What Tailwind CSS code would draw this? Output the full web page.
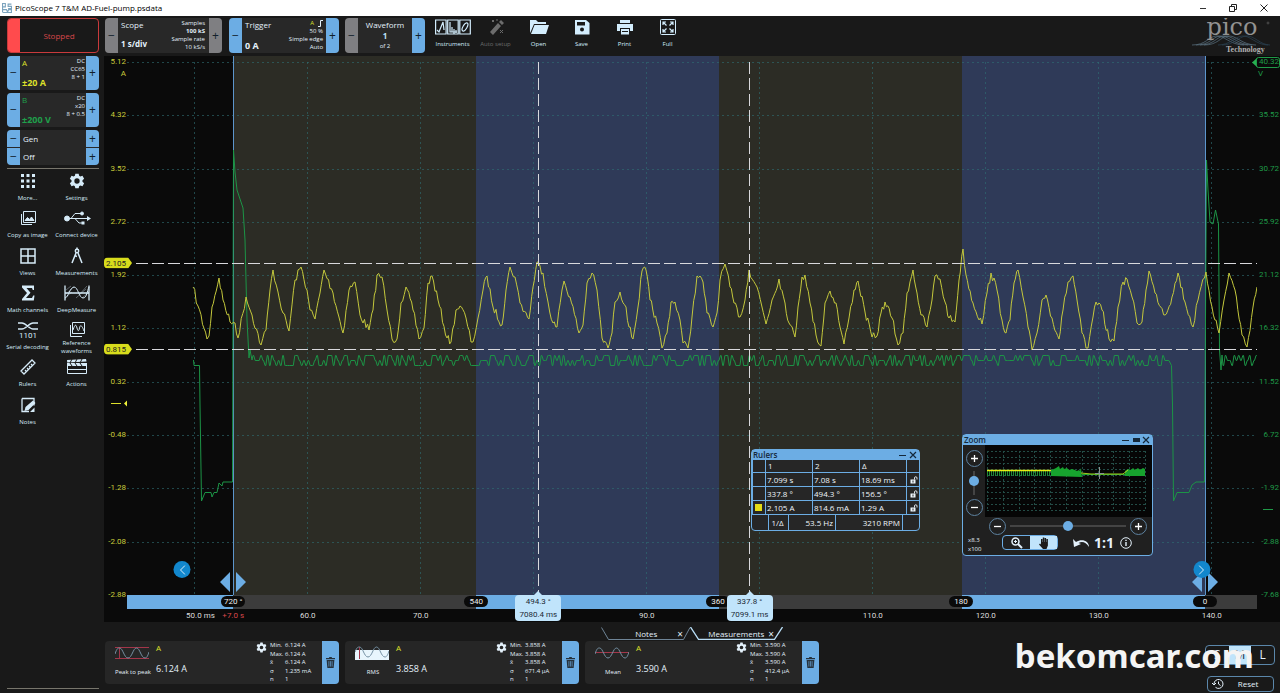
<!DOCTYPE html>
<html lang="en">
<head>
    <meta charset="UTF-8">
    <meta name="viewport" content="width=device-width, initial-scale=1.0">
    <title>PicoScope 7 T&amp;M AD-Fuel-pump.psdata</title>
    <script src="https://cdn.jsdelivr.net/npm/@tailwindcss/browser@4"></script>
</head>
<body class="h-screen min-h-[640px] flex flex-col overflow-hidden bg-[#191919] text-[#e4f1fb] font-['Open_Sans',sans-serif]">
    <!-- Shared icons -->
    <svg class="hidden">
        <symbol id="gear" viewBox="0 0 24 24"><path fill="currentColor" fill-rule="evenodd" d="M9.500 1h5l.7 3.300 1.800 1 3.200-1.100 2.500 4.300-2.500 2.300v2.400l2.500 2.300-2.500 4.300-3.200-1.100-1.800 1-.7 3.300h-5l-.7-3.300-1.800-1-3.200 1.100-2.500-4.300 2.500-2.300v-2.400L1.300 8.500l2.500-4.300L7 5.300l1.800-1zM12 8a4 4 0 1 0 0 8 4 4 0 0 0 0-8z"/></symbol>
        <symbol id="trash" viewBox="0 0 10 12"><path fill="currentColor" d="M3.500 0h3v1H10v1.500H0V1h3.500zM.7 3.200h8.600L8.500 12h-7z"/><path stroke="#6cade4" stroke-width=".7" d="M3.200 4.500v6M5 4.500v6M6.800 4.500v6"/></symbol>
        <symbol id="lock" viewBox="0 0 16 16"><path fill="currentColor" d="M1 7h10v8H1z"/><path fill="none" stroke="currentColor" stroke-width="1.800" d="M9 7V4a2.500 2.500 0 0 1 5 0v3"/><path fill="#262626" d="M5 9h2v4H5z"/></symbol>
    </svg>

    <!-- Title bar -->
    <header class="h-4 shrink-0 flex items-center bg-white text-black text-[8px] pl-0.5">
        <svg class="size-[10px] mr-[3px]" viewBox="0 0 9 9" fill="none" stroke="#7ba3bd"><path d="M.5 8.500V.5h2.500v3h-2M8.500 1H5.500v2h3v2h-3M1 6h3l1 2 1-2h2.500v2.500H1"/></svg>
        <h1 class="flex-1">PicoScope 7 T&amp;M AD-Fuel-pump.psdata</h1>
        <button aria-label="Minimise" class="w-[30px] flex justify-center"><svg class="size-2" viewBox="0 0 8 8"><path stroke="#333" d="M1 4.500h6"/></svg></button>
        <button aria-label="Restore" class="w-[30px] flex justify-center"><svg class="size-2" viewBox="0 0 8 8" fill="none" stroke="#222"><path d="M.5 2.500h5v5h-5zM2.500 2V.5h5v5H6"/></svg></button>
        <button aria-label="Close" class="w-[32px] flex justify-center"><svg class="size-2" viewBox="0 0 8 8"><path stroke="#222" d="M.5.5l7 7M7.500.5l-7 7"/></svg></button>
    </header>

    <div class="flex-1 min-h-0 flex">
        <!-- Sidebar -->
        <aside class="w-[104px] shrink-0 flex flex-col pt-0.5 pb-1 pl-[7px] pr-[5px]">
            <button class="h-[35px] shrink-0 flex rounded border border-[#c93a3c] overflow-hidden text-[#d8474a] text-[8px]">
                <span class="w-3 self-stretch bg-[#ff4b4d]"></span>
                <span class="flex-1 self-center">Stopped</span>
            </button>

            <!-- Channel A -->
            <div class="mt-[3px] h-[34px] shrink-0 flex rounded overflow-hidden bg-[#282828]">
                <button class="w-[13px] bg-[#6cade4] text-[#12202c] text-[12px]">−</button>
                <div class="flex-1 flex flex-col justify-between pl-0.5 py-0.5 text-[#dde02a] leading-[10px]">
                    <span class="text-[8px]">A</span>
                    <span class="text-[9px] font-bold">±20 A</span>
                </div>
                <div class="text-right text-[6px] leading-[8px] pr-px pt-px">DC<br>CC65<br>8 + 1</div>
                <button class="w-[13px] bg-[#6cade4] text-[#12202c] text-[12px]">+</button>
            </div>

            <!-- Channel B -->
            <div class="mt-[3px] h-[34px] shrink-0 flex rounded overflow-hidden bg-[#282828]">
                <button class="w-[13px] bg-[#6cade4] text-[#12202c] text-[12px]">−</button>
                <div class="flex-1 flex flex-col justify-between pl-0.5 py-0.5 text-[#1fa04b] leading-[10px]">
                    <span class="text-[8px]">B</span>
                    <span class="text-[9px] font-bold">±200 V</span>
                </div>
                <div class="text-right text-[6px] leading-[8px] pr-px pt-px">DC<br>x20<br>8 + 0.5</div>
                <button class="w-[13px] bg-[#6cade4] text-[#12202c] text-[12px]">+</button>
            </div>

            <!-- Signal generator -->
            <div class="mt-[3px] h-[35px] shrink-0 grid grid-rows-2 gap-px rounded overflow-hidden bg-[#282828] text-[8px]">
                <div class="flex items-center">
                    <button class="w-[13px] h-full bg-[#6cade4] text-[#12202c] text-[12px] leading-[12px]">−</button>
                    <span class="flex-1 pl-[3px]">Gen</span>
                    <button class="w-[13px] h-full bg-[#6cade4] text-[#12202c] text-[12px] leading-[12px]">+</button>
                </div>
                <div class="flex items-center">
                    <button class="w-[13px] h-full bg-[#6cade4] text-[#12202c] text-[12px] leading-[12px]">−</button>
                    <span class="flex-1 pl-[3px]">Off</span>
                    <button class="w-[13px] h-full bg-[#6cade4] text-[#12202c] text-[12px] leading-[12px]">+</button>
                </div>
            </div>
            <hr class="mt-[3px] border-[#77756c]">

            <!-- Tools -->
            <nav class="mt-[3px] -ml-1 -mr-0.5 h-[261px] shrink-0 grid grid-cols-2 grid-rows-7 text-[6px] leading-[8px] text-center text-[#d6ebf8] [&>button]:flex [&>button]:flex-col [&>button]:items-center [&>button]:justify-start [&_svg]:h-[18px] [&_svg]:shrink-0 [&_svg]:mb-1">
                <button><svg viewBox="0 0 18 18" fill="currentColor"><path d="M2 2h3v3H2zM7.500 2h3v3h-3zM13 2h3v3h-3zM2 7.500h3v3H2zM7.500 7.500h3v3h-3zM13 7.500h3v3h-3zM2 13h3v3H2zM7.500 13h3v3h-3zM13 13h3v3h-3z"/></svg>More...</button>
                <button><svg viewBox="0 0 18 18"><use href="#gear" x="1" y="1" width="16" height="16"/></svg>Settings</button>
                <button><svg viewBox="0 0 18 18" fill="none" stroke="currentColor"><path d="M4.500 2.500h12v11h-12zM2.500 5v10.500H13"/><path fill="currentColor" d="M6 11.500l2.500-3 2 2 2-2.500 2.500 3.500z"/></svg>Copy as image</button>
                <button><svg viewBox="0 0 28 18" fill="none" stroke="currentColor"><path d="M3 9.500h23M8 9.500l4-5h6M12 9.500l4 4.500h4"/><circle cx="4" cy="9.500" r="2.500" fill="currentColor"/><circle cx="19" cy="4.500" r="1.500" fill="currentColor"/><path fill="currentColor" stroke="none" d="M18.500 12.500h3v3h-3zM24 7l4 2.500-4 2.500z"/></svg>Connect device</button>
                <button><svg viewBox="0 0 18 18" fill="none" stroke="currentColor" stroke-width="1.500"><path d="M2 2h14v14H2zM9 2v14M2 9h14"/></svg>Views</button>
                <button><svg viewBox="0 0 18 18" fill="none" stroke="currentColor" stroke-width="1.500"><circle cx="9" cy="4" r="1.700"/><path d="M9 .5v2M8 6L4 16M10 6l4 10M6.500 8.500l2.500 1"/></svg>Measurements</button>
                <button><svg viewBox="0 0 18 18" fill="currentColor"><path d="M3 1.500h12v4.500h-1.200L13 4H7.500l4 4.800L7 14h6l1.200-2.500h1.300L14.800 16.500H3V15l5-6-5-5.500z"/></svg>Math channels</button>
                <button><svg viewBox="0 0 28 18" fill="none" stroke="currentColor"><path stroke-width="1.300" d="M2 1.500v15M26 1.500v15M2 9h24"/><path d="M2 14C5 14 7 3 11 3s5 11 9 11 4-7 6-11"/><path stroke-width=".5" opacity=".7" d="M3 6l5-4M3 10l8-7M13 14l10-9M19 14l7-6M16 11l8-9M3 13l6-5"/></svg>DeepMeasure</button>
                <button><svg viewBox="0 0 20 18" fill="none" stroke="currentColor" stroke-width="1.300"><path d="M0 2h4c4 0 7 6 11 6h5M0 8h4c4 0 7-6 11-6h5"/><text x="10" y="17" text-anchor="middle" font-size="8" font-family="Roboto" fill="currentColor" stroke="none">1101</text></svg>Serial decoding</button>
                <button><svg viewBox="0 0 18 18" fill="none" stroke="currentColor"><path d="M4.500 1.500h12v11h-12zM2.500 4v11.500H14"/><path d="M5 9c2-6 3-6 4-2s2 3 2.500 0 2-4 4.500 3"/></svg><span class="-mt-1">Reference<br>waveforms</span></button>
                <button><svg viewBox="0 0 18 18" fill="none" stroke="currentColor" stroke-width="1.300"><path d="M2 13L13 2l3 3L5 16zM6 12l1 1M8 10l1 1M10 8l1 1M12 6l1 1"/></svg>Rulers</button>
                <button><svg viewBox="0 0 22 18"><path fill="none" stroke="currentColor" d="M1.500 7.500h19v8h-19z"/><path fill="currentColor" d="M1 2l19-1 .5 2.500L1.200 4.500zM1 5h20v3H1zM1 11h20v1H1z"/><path stroke="#191919" d="M6 1L4 5M11 1L9 5M16 1l-2 4M4 5l2 3M9 5l2 3M14 5l2 3"/></svg>Actions</button>
                <button><svg viewBox="0 0 18 18"><path fill="none" stroke="currentColor" stroke-width="1.300" d="M3 2.500h12v7M3 2.500v13h7"/><path fill="currentColor" d="M5.500 15l1-4L14 4.500l2.500 2.500L9.500 14zM11 16h4.500v-4.500z"/></svg>Notes</button>
            </nav>
            <hr class="mt-auto border-[#77756c]">
        </aside>

        <div class="flex-1 min-w-0 flex flex-col">
            <!-- Toolbar -->
            <div class="h-10 shrink-0 flex items-start pt-0.5 pl-px">
                <div class="w-[117px] h-[35px] flex rounded overflow-hidden bg-[#282828]">
                    <button class="w-[13px] bg-[#7f7f82] text-[#12202c] text-[12px]">−</button>
                    <div class="flex-1 flex flex-col justify-between pl-[3px] py-0.5 pb-1 leading-[10px] whitespace-nowrap">
                        <span class="text-[8px]">Scope</span>
                        <span class="text-[8px] font-bold">1 s/div</span>
                    </div>
                    <div class="text-right text-[6px] leading-[8px] pr-1 pt-px whitespace-nowrap">Samples<br><b>100 kS</b><br>Sample rate<br>10 kS/s</div>
                    <button class="w-[13px] bg-[#7f7f82] text-[#12202c] text-[12px]">+</button>
                </div>
                <div class="ml-[7px] w-[110px] h-[35px] flex rounded overflow-hidden bg-[#282828]">
                    <button class="w-[13px] bg-[#6cade4] text-[#12202c] text-[12px]">−</button>
                    <div class="flex-1 flex flex-col justify-between pl-[3px] py-0.5 leading-[10px] whitespace-nowrap">
                        <span class="text-[8px]">Trigger</span>
                        <span class="text-[9px] font-bold">0 A</span>
                    </div>
                    <div class="text-right text-[6px] leading-[8px] pr-[3px] pt-px whitespace-nowrap">
                        <span class="text-[#dde02a] mr-1">A</span><svg class="inline h-[7px] w-[5px]" viewBox="0 0 5 7" fill="none" stroke="currentColor"><path d="M0 6.500h2.500v-6H5"/></svg><br>50 %<br>Simple edge<br>Auto
                    </div>
                    <button class="w-[13px] bg-[#6cade4] text-[#12202c] text-[12px]">+</button>
                </div>
                <div class="ml-1.5 w-20 h-[35px] flex rounded overflow-hidden bg-[#282828]">
                    <button class="w-[13px] bg-[#7f7f82] text-[#12202c] text-[12px]">−</button>
                    <div class="flex-1 flex flex-col items-center justify-center text-[8px] leading-[11px]">
                        <span>Waveform</span><span class="font-bold text-[#bfe3fa]">1</span><span class="text-[6px]">of 2</span>
                    </div>
                    <button class="w-[13px] bg-[#6cade4] text-[#12202c] text-[12px]">+</button>
                </div>
                <nav class="ml-[6px] flex text-[6px] leading-[8px] text-[#d3edfd] [&>button]:w-[43px] [&>button]:shrink-0 [&>button]:flex [&>button]:flex-col [&>button]:items-center [&_svg]:h-[18px] [&_svg]:mb-1">
                    <button><svg class="w-9" viewBox="0 0 36 18" fill="none" stroke="currentColor" stroke-width="1.200"><path d="M.6 2h10.500v14H.6zM12.700 2h10.500v14H12.700zM24.800 2h10.500v14H24.800z"/><path d="M2 12l2 2L8 4l1 8M15 4v10h7M17 9v5M19 11v5M21 12v3"/><ellipse cx="30" cy="9" rx="2" ry="4.500" transform="rotate(30 30 9)"/></svg>Instruments</button>
                    <button class="text-[#6c6c6c]" disabled><svg viewBox="0 0 18 18" fill="currentColor"><path d="M3 14L11 5l3 3-8 9zM12 4l2-2 3 3-2 2z"/><path stroke="currentColor" d="M5 2l2 2M7 2L5 4M13 12l3 3M16 12l-3 3M10 1v2"/></svg>Auto setup</button>
                    <button><svg viewBox="0 0 20 18" fill="currentColor"><path d="M1 2h6l2 2h8v2H5L2 13l-1 2z"/><path d="M5.500 7H20l-3 9H2z"/></svg>Open</button>
                    <button><svg viewBox="0 0 18 18" fill="currentColor" fill-rule="evenodd"><path d="M2 2h11l3.500 3v11.500H2zM4 4v3.500h8V4zM9 9.500a2 2 0 1 0 0 4 2 2 0 0 0 0-4z"/></svg>Save</button>
                    <button><svg viewBox="0 0 18 18" fill="currentColor"><path d="M4 2h10v3H4zM1 6h16v7h-3v-3H4v3H1z"/><path d="M5 11h8v5.500H5z"/><path stroke="#191919" d="M6 13.500h6"/></svg>Print</button>
                    <button><svg viewBox="0 0 18 18" fill="none" stroke="currentColor"><rect x="1.500" y="1.500" width="15" height="15" rx="1"/><path stroke-width="1.200" d="M4 7V4h3M4 4l3.500 3.500M11 4h3v3M14 4l-3.500 3.500M4 11v3h3M4 14l3.500-3.500M11 14h3v-3M14 14l-3.500-3.500"/></svg>Full</button>
                </nav>
                <!-- Logo -->
                <svg class="ml-auto mr-2 w-[82px] h-[38px]" viewBox="0 0 82 38">
                    <g fill="none" stroke="#5d7585" stroke-width=".7">
                        <path d="M2 27c14 0 16-8 24-9s14 9 28 9M6 27c14 0 16-8 24-9s14 9 28 9M10 27c14 0 16-8 24-9s14 9 28 9M14 27c14 0 16-8 24-9s14 9 28 9"/>
                        <path stroke="#2b4354" d="M28 27c12 0 16-8 24-9s14 9 26 9M32 27c12 0 16-8 24-9s14 9 24 9"/>
                    </g>
                    <text x="42" y="17" text-anchor="middle" font-family="DejaVu Serif" font-size="24" fill="#929292">pico</text>
                    <circle cx="78" cy="5" r="1" fill="none" stroke="#777" stroke-width=".5"/>
                    <text x="36" y="34" font-family="Liberation Serif" font-weight="bold" font-size="8" fill="#b0b0b0">Technology</text>
                </svg>
            </div>

            <!-- Scope view -->
            <main class="relative flex-1 min-h-0 flex flex-col bg-[#0a0a0a] font-['Roboto',sans-serif] text-[8px] leading-[12px]">
                <div class="flex-1 min-h-0 flex">
                    <!-- Channel A axis -->
                    <div class="relative w-[23px] shrink-0 -mb-1.5 pr-px flex flex-col justify-between text-right text-[#c9cb3a]">
                        <span>5.12</span><span>4.32</span><span>3.52</span><span>2.72</span><span>1.92</span><span>1.12</span><span>0.32</span><span>-0.48</span><span>-1.28</span><span>-2.08</span><span>-2.88</span>
                        <span class="absolute right-px top-3">A</span>
                        <svg class="absolute right-0 top-[63%] w-4 h-2" viewBox="0 0 16 8"><path stroke="#dde02a" d="M0 4.500h10"/><path fill="#f0f23a" d="M16 1.500v6l-3-3z"/></svg>
                    </div>

                    <!-- Plot -->
                    <div class="relative flex-1 min-w-0">
                        <svg class="absolute inset-0 size-full [&_*]:[vector-effect:non-scaling-stroke]" viewBox="127 56 1130 539" preserveAspectRatio="none" fill="none">
                            <path fill="#2c2c25" d="M233 56h243v539H233zM719 56h243v539H719z"/>
                            <path fill="#2f3a58" d="M476 56h243v539H476zM962 56h243v539H962z"/>
                            <g stroke="#2f7075" stroke-opacity=".6" stroke-dasharray="2 3">
                                <path d="M127 62.500h1130M127 115.500h1130M127 169.500h1130M127 222.500h1130M127 275.500h1130M127 328.500h1130M127 382.500h1130M127 435.500h1130M127 488.500h1130M127 542.500h1130"/>
                                <path d="M194.500 62v533M307.500 62v533M420.500 62v533M533.500 62v533M646.500 62v533M759.500 62v533M872.500 62v533M985.500 62v533M1098.500 62v533M1211.500 62v533"/>
                            </g>
                            <path stroke="#5c95cc" d="M233.500 56v539M1205.500 56v539"/>
                            <path id="trace-b" stroke="#1c9446"/>
                            <path id="trace-a" stroke="#c4c83c"/>
                            <path stroke="#d8d8dc" stroke-dasharray="12 4" d="M136 263.500h1121M136 349.500h1121M538.500 62v533M749.500 62v533"/>
                        </svg>

                        <!-- Partition handles -->
                        <svg class="absolute left-[9.4%] bottom-[3px] -translate-x-1/2 w-7 h-5" viewBox="0 0 28 20" fill="#6cade4"><path d="M11 0v20L1 10zM17 0v20l10-10z"/></svg>
                        <svg class="absolute left-[95.4%] bottom-[3px] -translate-x-1/2 w-7 h-5" viewBox="0 0 28 20" fill="#6cade4"><path d="M11 0v20L1 10zM17 0v20l10-10z"/></svg>
                        <button aria-label="Previous waveform" class="absolute left-[4.9%] bottom-[17px] -translate-x-1/2 size-[17px] rounded-full bg-[#1287cd] flex items-center justify-center"><svg class="h-[10px] w-[6px]" viewBox="0 0 6 10" fill="none" stroke="#d5ecfa"><path d="M5.500.5L1 5l4.500 4.500"/></svg></button>
                        <button aria-label="Next waveform" class="absolute left-[95.1%] bottom-[17px] -translate-x-1/2 size-[17px] rounded-full bg-[#1287cd] flex items-center justify-center"><svg class="h-[10px] w-[6px]" viewBox="0 0 6 10" fill="none" stroke="#d5ecfa"><path d="M.5.5L5 5 .5 9.500"/></svg></button>

                        <!-- Signal ruler tags -->
                        <div class="absolute -left-[23px] top-[38.4%] -translate-y-1/2 w-7 h-[11px] pl-0.5 bg-[#d8dc1c] text-[#222] leading-[11px] rounded-l-sm [clip-path:polygon(0_0,86%_0,100%_50%,86%_100%,0_100%)]">2.105</div>
                        <div class="absolute -left-[23px] top-[54.4%] -translate-y-1/2 w-7 h-[11px] pl-0.5 bg-[#d8dc1c] text-[#222] leading-[11px] rounded-l-sm [clip-path:polygon(0_0,86%_0,100%_50%,86%_100%,0_100%)]">0.815</div>
                    </div>

                    <!-- Channel B axis -->
                    <div class="relative w-[23px] shrink-0 -mb-1.5 pr-px flex flex-col justify-between text-right text-[#1f9a48]">
                        <span>40.32</span><span>35.52</span><span>30.72</span><span>25.92</span><span>21.12</span><span>16.32</span><span>11.52</span><span>6.72</span><span>-1.92</span><span>-2.88</span><span>-7.68</span>
                        <span class="absolute left-px top-3">V</span>
                        <svg class="absolute -left-[5px] top-px w-[28px] h-[11px]" viewBox="0 0 28 11"><path fill="#27b050" d="M0 5.500L5 1v9z"/><rect x="4.500" y=".5" width="23" height="10" rx="2" fill="none" stroke="#1f9a48"/></svg>
                        <svg class="absolute left-[6px] top-[83%] w-[10px] h-[3px]" viewBox="0 0 10 3"><path stroke="#1f9a48" d="M0 1.500h10"/></svg>
                    </div>
                </div>

                <!-- Phase bar and time axis -->
                <div class="relative mx-[23px] shrink-0">
                    <div class="h-[14px] flex">
                        <span class="flex-106 bg-[#6cade4]"></span><span class="flex-243 bg-[#3c3c3c]"></span><span class="flex-243 bg-[#6cade4]"></span><span class="flex-243 bg-[#3c3c3c]"></span><span class="flex-243 bg-[#6cade4]"></span><span class="flex-52 bg-[#3c3c3c]"></span>
                    </div>
                    <div class="h-[13px] relative text-[#ddd] whitespace-nowrap [&>span]:absolute [&>span]:-translate-x-1/2 [&>span]:top-px">
                        <span class="left-[6.5%]">50.0 ms</span>
                        <span class="left-[9.4%] text-[#d8474a]">+7.0 s</span>
                        <span class="left-[16%]">60.0</span>
                        <span class="left-[26%]">70.0</span>
                        <span class="left-[46%]">90.0</span>
                        <span class="left-[66%]">110.0</span>
                        <span class="left-[76%]">120.0</span>
                        <span class="left-[86%]">130.0</span>
                        <span class="left-[96%]">140.0</span>
                    </div>
                    <div class="absolute inset-x-0 top-px text-[#eee] text-center [&>span]:absolute [&>span]:-translate-x-1/2 [&>span]:w-6 [&>span]:h-[11px] [&>span]:leading-[11px] [&>span]:rounded-full [&>span]:bg-[#0a0a0a]">
                        <span class="left-[9.4%]">720 °</span>
                        <span class="left-[30.9%]">540</span>
                        <span class="left-[52.3%]">360</span>
                        <span class="left-[73.8%]">180</span>
                        <span class="left-[95.4%]">0</span>
                    </div>
                    <div class="absolute left-[36.4%] top-0 -translate-x-1/2 w-[46px] h-[26px] rounded-sm bg-[#c0e4fb] text-[#1c2a36] text-center leading-[13px] before:absolute before:-top-1 before:left-[19px] before:border-x-4 before:border-b-4 before:border-x-transparent before:border-b-[#c0e4fb]">494.3 °<br>7080.4 ms</div>
                    <div class="absolute left-[55.1%] top-0 -translate-x-1/2 w-[46px] h-[26px] rounded-sm bg-[#c0e4fb] text-[#1c2a36] text-center leading-[13px] before:absolute before:-top-1 before:left-[19px] before:border-x-4 before:border-b-4 before:border-x-transparent before:border-b-[#c0e4fb]">337.8 °<br>7099.1 ms</div>
                </div>

                <!-- Rulers window -->
                <section class="absolute right-[360px] bottom-[91px] w-[169px] border border-[#6cade4] rounded-sm bg-[#262626] text-[#eef5fa] font-['Open_Sans',sans-serif]">
                    <header class="h-[10px] flex items-center bg-[#6cade4] text-[#14283a] leading-[10px] pl-px pr-px">
                        <h2 class="flex-1 font-semibold">Rulers</h2>
                        <button aria-label="Minimise"><svg class="size-[10px]" viewBox="0 0 10 10"><path stroke="currentColor" d="M1 5.500h7"/></svg></button>
                        <button aria-label="Close"><svg class="size-[10px]" viewBox="0 0 10 10"><path stroke="currentColor" stroke-width="1.200" d="M2 2l6 6M8 2L2 8"/></svg></button>
                    </header>
                    <table class="w-full table-fixed border-collapse text-left [&_tr]:border-b [&_tr]:border-[#6cade4] [&_td]:border-l [&_th]:border-l [&_td]:border-[#6cade4] [&_th]:border-[#6cade4] [&_td]:pl-px [&_td]:h-[14px] [&_th]:h-[12px] [&_th]:pl-0.5 [&_th]:font-normal [&_td]:whitespace-nowrap leading-[12px]">
                        <colgroup><col class="w-[13px]"><col class="w-[47px]"><col class="w-[47px]"><col class="w-[47px]"><col></colgroup>
                        <thead>
                            <tr><th></th><th>1</th><th>2</th><th>Δ</th><th></th></tr>
                        </thead>
                        <tbody>
                            <tr><td></td><td>7.099 s</td><td>7.08 s</td><td>18.69 ms</td><td><svg class="size-2 ml-0.5"><use href="#lock"/></svg></td></tr>
                            <tr><td></td><td>337.8 °</td><td>494.3 °</td><td>156.5 °</td><td><svg class="size-2 ml-0.5"><use href="#lock"/></svg></td></tr>
                            <tr><td><span class="block size-[7px] ml-px bg-[#e4dc14]"></span></td><td>2.105 A</td><td>814.6 mA</td><td>1.29 A</td><td><svg class="size-2 ml-0.5"><use href="#lock"/></svg></td></tr>
                        </tbody>
                    </table>
                    <div class="h-[15px] mx-4 flex items-center text-right border-x border-[#6cade4] [&>span]:h-full [&>span]:leading-[15px] [&>span]:pr-0.5">
                        <span class="w-[19px] text-center">1/Δ</span><span class="w-12 border-x border-[#6cade4]">53.5 Hz</span><span class="flex-1">3210 RPM</span>
                    </div>
                </section>

                <!-- Zoom window -->
                <section class="absolute right-[127px] bottom-[66px] w-[191px] h-[122px] flex flex-col border border-[#6cade4] rounded-sm bg-[#202020] font-['Open_Sans',sans-serif]">
                    <header class="h-[10px] shrink-0 flex items-center bg-[#6cade4] text-[#14283a] leading-[10px] pl-px pr-px">
                        <h2 class="flex-1 font-semibold">Zoom</h2>
                        <button aria-label="Minimise"><svg class="size-[10px]" viewBox="0 0 10 10"><path stroke="currentColor" d="M1 5.500h7"/></svg></button>
                        <button aria-label="Dock"><svg class="size-[10px]" viewBox="0 0 10 10"><path fill="currentColor" d="M2 3h7v4H2z"/></svg></button>
                        <button aria-label="Close"><svg class="size-[10px]" viewBox="0 0 10 10"><path stroke="currentColor" stroke-width="1.200" d="M2 2l6 6M8 2L2 8"/></svg></button>
                    </header>
                    <div class="flex h-[72px] shrink-0">
                        <div class="w-[22px] flex flex-col items-center justify-between pt-[5px] pb-px">
                            <button aria-label="Zoom in vertically" class="size-[17px] rounded-full border border-[#5d82a0] flex items-center justify-center"><svg class="size-[7px]" viewBox="0 0 7 7" stroke="#fff" stroke-width="1.300"><path d="M0 3.500h7M3.500 0v7"/></svg></button>
                            <input type="range" aria-label="Vertical zoom" value="65" class="h-[24px] w-[10px] appearance-none bg-transparent [writing-mode:vertical-lr] [direction:rtl] bg-[linear-gradient(#444,#444)] bg-size-[2px_100%] bg-center bg-no-repeat [&::-webkit-slider-thumb]:appearance-none [&::-webkit-slider-thumb]:size-[10px] [&::-webkit-slider-thumb]:rounded-full [&::-webkit-slider-thumb]:bg-[#6cade4]">
                            <button aria-label="Zoom out vertically" class="size-[17px] rounded-full border border-[#5d82a0] flex items-center justify-center"><svg class="size-[7px]" viewBox="0 0 7 7" stroke="#fff" stroke-width="1.300"><path d="M0 3.500h7"/></svg></button>
                        </div>
                        <svg class="flex-1 bg-[#060606]" viewBox="984 445 167 72" fill="none">
                            <path stroke="#234c46" stroke-dasharray="2 2" d="M986.500 451v60M1002.500 451v60M1018.500 451v60M1033.500 451v60M1049.500 451v60M1065.500 451v60M1081.500 451v60M1097.500 451v60M1112.500 451v60M1128.500 451v60M1144.500 451v60M986 451.500h158M986 457.500h158M986 463.500h158M986 469.500h158M986 475.500h158M986 481.500h158M986 487.500h158M986 492.500h158M986 498.500h158M986 504.500h158M986 510.500h158"/>
                            <path stroke="#1d8a35" stroke-width="5" stroke-dasharray="1 1" d="M986 473.500h64"/>
                            <path fill="#17a32e" d="M1050 476v-6l3-1 2-1 3-2 1 3 3-2 1 2 3-1 2 2 3-1 3 1 2 1 2-1 1 1 1-3 1 9zM1124 476v-5l3-2 3 1 2-2 2 2 3-2 2 2 3-2 2 1v7z"/>
                            <path stroke="#17a32e" d="M1081 474.500h44"/>
                            <path stroke="#e8ee12" stroke-width="1.500" d="M986 470.500h64"/>
                            <path stroke="#a8cc20" d="M1080 473l10 1h32l5-4"/>
                            <path stroke="#8a9290" d="M1098.500 467v12M1094 473.500h9"/>
                        </svg>
                    </div>
                    <div class="h-[18px] shrink-0 flex items-center gap-1 pl-[26px] pr-[5px]">
                        <button aria-label="Zoom out" class="size-[17px] shrink-0 rounded-full border border-[#5d82a0] flex items-center justify-center"><svg class="size-[7px]" viewBox="0 0 7 7" stroke="#fff" stroke-width="1.300"><path d="M0 3.500h7"/></svg></button>
                        <input type="range" aria-label="Horizontal zoom" value="50" class="flex-1 min-w-0 h-[10px] appearance-none bg-[linear-gradient(#444,#444)] bg-size-[100%_2px] bg-center bg-no-repeat [&::-webkit-slider-thumb]:appearance-none [&::-webkit-slider-thumb]:size-[10px] [&::-webkit-slider-thumb]:rounded-full [&::-webkit-slider-thumb]:bg-[#6cade4]">
                        <button aria-label="Zoom in" class="size-[17px] shrink-0 rounded-full border border-[#5d82a0] flex items-center justify-center"><svg class="size-[7px]" viewBox="0 0 7 7" stroke="#fff" stroke-width="1.300"><path d="M0 3.500h7M3.500 0v7"/></svg></button>
                    </div>
                    <div class="flex-1 flex items-start pl-[5px] text-[#e4f1fb]">
                        <div class="w-[34px] pt-px text-[6px] leading-[9px]">x8.3<br>x100</div>
                        <div class="w-[56px] h-[15px] flex border border-[#6cade4] rounded-sm">
                            <button aria-label="Zoom tool" class="flex-1 flex items-center justify-center"><svg class="size-3" viewBox="0 0 12 12" fill="none" stroke="currentColor" stroke-width="1.500"><circle cx="4.500" cy="4.500" r="3.500"/><path stroke-width="2" d="M7 7l4 4"/><path stroke-width="1" d="M3 4.500h3M4.500 3v3"/></svg></button>
                            <button aria-label="Pan tool" class="flex-1 flex items-center justify-center bg-[#c0e4fb] text-[#1c1c1c]"><svg class="size-3" viewBox="0 0 12 12" fill="currentColor"><path d="M3 5V2h1.500v3h.3V.5h1.500V5h.3V1h1.500v4h.3V2h1.500v6.500L8.500 12H5L1 7.500 2 6.500l1 1z"/></svg></button>
                        </div>
                        <div class="h-[15px] ml-[15px] flex items-center gap-1">
                            <button aria-label="Undo zoom"><svg class="w-[17px] h-3" viewBox="0 0 17 12"><path fill="currentColor" d="M0 2l1 8 7-3-2.500-1C9 4 13 5 16 10c0-6-7-9-13-5z"/></svg></button>
                            <button class="text-[14px] font-bold leading-[14px]">1:1</button>
                            <button aria-label="Information" class="ml-0.5"><svg class="size-3" viewBox="0 0 12 12" fill="none" stroke="currentColor"><circle cx="6" cy="6" r="5.300"/><path stroke-width="1.400" d="M6 5v4M6 2.800v1.200"/></svg></button>
                        </div>
                    </div>
                </section>
            </main>

            <!-- Bottom panel -->
            <footer class="relative h-[71px] shrink-0 pt-[5px]">
                <div class="flex justify-center text-[8px] leading-[12px]">
                    <div class="relative w-[89px] h-[13px] flex items-center justify-end gap-4 pr-[7px]">
                        <svg class="absolute inset-0 size-full" viewBox="0 0 89 13" fill="none" stroke="#6f8597"><path d="M.5.5l7 12h75l6.500-12"/></svg>
                        <button class="relative px-1">Notes</button><button aria-label="Close Notes" class="relative text-[10px]">×</button>
                    </div>
                    <div class="relative w-[93px] h-[13px] flex items-center justify-end gap-1 pr-[9px]">
                        <svg class="absolute inset-0 size-full" viewBox="0 0 93 13" fill="none" stroke="#b9def6" stroke-width="1.300"><path d="M.5 0l8 12.300h76L92.500 0"/></svg>
                        <button class="relative">Measurements</button><button aria-label="Close Measurements" class="relative text-[10px]">×</button>
                    </div>
                </div>

                <div class="mt-px ml-px flex gap-1.5">
                    <article class="w-[234px] h-[43px] flex rounded overflow-hidden bg-[#262626]">
                        <div class="w-[50px] pt-[5px] flex flex-col items-center justify-between pb-2">
                            <svg class="w-[34px] h-[14px] ml-1" viewBox="0 0 34 14" fill="none"><path stroke="#a3364a" d="M0 1.500h34M0 12.500h34M4.500 1v12"/><path stroke="#7590a3" d="M0 8C2 2 3 2 4.500 2 8 2 9 12 13 12s5-10 8.500-10S26 12 30 12c2 0 3-3 4-6"/></svg>
                            <h3 class="text-[6px] leading-[8px] ml-1.5 whitespace-nowrap">Peak to peak</h3>
                        </div>
                        <div class="flex-1 pl-px pt-px flex flex-col"><span class="text-[8px] leading-[12px] text-[#dde02a]">A</span><span class="mt-2 text-[9px] leading-[14px]">6.124 A</span></div>
                        <button aria-label="Peak to peak settings" class="self-start mt-px mr-[3px]"><svg class="size-[11px]"><use href="#gear"/></svg></button>
                        <dl class="w-[52px] grid grid-cols-[15px_auto] grid-rows-5 text-[6px] leading-[8px]"><dt>Min.</dt><dd>6.124 A</dd><dt>Max.</dt><dd>6.124 A</dd><dt>x̄</dt><dd>6.124 A</dd><dt>σ</dt><dd>1.235 mA</dd><dt>n</dt><dd>1</dd></dl>
                        <button aria-label="Delete Peak to peak" class="w-[17px] flex items-center justify-center bg-[#6cade4] text-[#26323c]"><svg class="w-[9px] h-[11px]"><use href="#trash"/></svg></button>
                    </article>
                    <article class="w-[234px] h-[43px] flex rounded overflow-hidden bg-[#262626]">
                        <div class="w-[50px] pt-[5px] flex flex-col items-center justify-between pb-2">
                            <svg class="w-[34px] h-[14px] ml-1" viewBox="0 0 34 14" fill="none"><path fill="#e8f5fd" d="M0 4h34v10H0z"/><path stroke="#a3364a" d="M4.500 1v12"/><path stroke="#7590a3" d="M0 6C2 1 3 1 4.500 1 8 1 9 11 13 11s5-10 8.500-10S26 11 30 11c2 0 3-3 4-6"/></svg>
                            <h3 class="text-[6px] leading-[8px] ml-1.5 whitespace-nowrap">RMS</h3>
                        </div>
                        <div class="flex-1 pl-px pt-px flex flex-col"><span class="text-[8px] leading-[12px] text-[#dde02a]">A</span><span class="mt-2 text-[9px] leading-[14px]">3.858 A</span></div>
                        <button aria-label="RMS settings" class="self-start mt-px mr-[3px]"><svg class="size-[11px]"><use href="#gear"/></svg></button>
                        <dl class="w-[52px] grid grid-cols-[15px_auto] grid-rows-5 text-[6px] leading-[8px]"><dt>Min.</dt><dd>3.858 A</dd><dt>Max.</dt><dd>3.858 A</dd><dt>x̄</dt><dd>3.858 A</dd><dt>σ</dt><dd>671.4 µA</dd><dt>n</dt><dd>1</dd></dl>
                        <button aria-label="Delete RMS" class="w-[17px] flex items-center justify-center bg-[#6cade4] text-[#26323c]"><svg class="w-[9px] h-[11px]"><use href="#trash"/></svg></button>
                    </article>
                    <article class="w-[234px] h-[43px] flex rounded overflow-hidden bg-[#262626]">
                        <div class="w-[50px] pt-[5px] flex flex-col items-center justify-between pb-2">
                            <svg class="w-[34px] h-[14px] ml-1" viewBox="0 0 34 14" fill="none"><path stroke="#a3364a" d="M0 6.500h34"/><path stroke="#7590a3" d="M0 8C2 2 3 2 4.500 2 8 2 9 12 13 12s5-10 8.500-10S26 12 30 12c2 0 3-3 4-6"/></svg>
                            <h3 class="text-[6px] leading-[8px] ml-1.5 whitespace-nowrap">Mean</h3>
                        </div>
                        <div class="flex-1 pl-px pt-px flex flex-col"><span class="text-[8px] leading-[12px] text-[#dde02a]">A</span><span class="mt-2 text-[9px] leading-[14px]">3.590 A</span></div>
                        <button aria-label="Mean settings" class="self-start mt-px mr-[3px]"><svg class="size-[11px]"><use href="#gear"/></svg></button>
                        <dl class="w-[52px] grid grid-cols-[15px_auto] grid-rows-5 text-[6px] leading-[8px]"><dt>Min.</dt><dd>3.590 A</dd><dt>Max.</dt><dd>3.590 A</dd><dt>x̄</dt><dd>3.590 A</dd><dt>σ</dt><dd>412.4 µA</dd><dt>n</dt><dd>1</dd></dl>
                        <button aria-label="Delete Mean" class="w-[17px] flex items-center justify-center bg-[#6cade4] text-[#26323c]"><svg class="w-[9px] h-[11px]"><use href="#trash"/></svg></button>
                    </article>

                    <!-- Size and reset -->
                    <div class="ml-auto mr-[5px] mt-1 flex flex-col items-center gap-[11px]">
                        <div class="w-[70px] h-5 grid grid-cols-3 border border-[#5b87ab] rounded-sm text-[12px] leading-[18px]">
                            <button>S</button><button class="bg-[#c0e4fb] text-[#1c2a36]">M</button><button>L</button>
                        </div>
                        <button class="w-[67px] h-4 flex items-center pl-1 border border-[#5b87ab] rounded-sm text-[8px]">
                            <svg class="size-3" viewBox="0 0 12 12" fill="none" stroke="currentColor"><path d="M2 6a4.500 4.500 0 1 1 1.500 3.300M6.500 3.500V6l2 1.500M0 5l2 2 2-2"/></svg>
                            <span class="flex-1">Reset</span>
                        </button>
                    </div>
                </div>
                <p class="absolute right-[26px] top-[16px] font-['Noto_Sans',sans-serif] font-bold text-[33px] leading-[36px] text-[#f4f4f4]">bekomcar.com</p>
            </footer>
        </div>
    </div>

    <script>
        // Pump current, turning points of the trace
        const current = [
            193,287, 198,306, 207,339, 209,336, 212,307, 219,278, 223,300, 230,322, 235,323, 238,338, 246,297, 252,315, 261,345, 266,330, 270,290, 273,270, 278,292, 283,313, 289,331, 295,280,
            301,267, 307,290, 310,310, 315,319, 320,293, 324,270, 333,293, 343,333, 349,290, 355,282, 360,315, 369,330, 373,310, 377,275, 382,277, 387,310, 392,339, 397,339, 401,303, 406,287,
            413,310, 419,339, 424,328, 428,283, 432,276, 438,300, 447,338, 451,342, 456,310, 460,306, 466,318, 471,342, 473,342, 478,318, 483,290, 487,276, 493,307, 502,325, 506,290, 510,267,
            515,277, 520,303, 529,319, 533,287, 537,262, 543,273, 548,302, 553,323, 557,327, 562,290, 564,281, 570,297, 579,333, 583,325, 587,283, 592,273, 597,290, 602,338, 608,348, 612,333,
            615,302, 620,292, 626,307, 629,327, 633,339, 638,307, 642,271, 646,270, 650,300, 657,323, 662,348, 667,333, 671,302, 675,302, 680,320, 683,343, 688,348, 692,317, 697,276, 703,282,
            707,313, 713,327, 717,313, 720,280, 725,264, 730,287, 734,303, 740,317, 745,300, 749,270, 757,287, 762,307, 766,324, 772,300, 779,279, 785,303, 789,323, 795,337, 798,307, 802,277,
            805,275, 810,303, 816,335, 821,346, 825,303, 830,291, 836,303, 840,327, 844,344, 849,318, 854,290, 858,281, 865,312, 872,337, 877,336, 881,313, 885,302, 892,318, 898,345, 903,333,
            907,293, 913,270, 917,293, 921,315, 927,327, 932,300, 935,276, 940,279, 945,302, 949,318, 955,322, 959,280, 963,249, 966,275, 973,303, 982,324, 987,293, 991,273, 997,290, 1002,320,
            1006,333, 1010,320, 1014,283, 1018,270, 1023,297, 1028,327, 1032,350, 1037,333, 1042,300, 1046,295, 1052,318, 1059,339, 1063,310, 1068,282, 1073,276, 1077,300, 1082,333, 1086,348,
            1088,348, 1093,317, 1096,302, 1102,310, 1109,339, 1114,341, 1118,307, 1123,282, 1127,279, 1132,297, 1137,323, 1142,322, 1146,290, 1149,271, 1155,293, 1165,315, 1172,297, 1178,273,
            1185,302, 1193,327, 1198,300, 1206,272, 1212,307, 1219,333, 1224,300, 1229,273, 1235,290, 1242,335, 1247,347, 1253,307, 1257,287
        ];

        let seed = 7;
        function random() {
            seed = (seed * 16807) % 2147483647;
            return seed / 2147483647;
        }

        // Adds small steps between turning points
        let a = "M" + current[0] + " " + current[1];
        for (let i = 2; i < current.length; i += 2) {
            const [x0, y0, x1, y1] = current.slice(i - 2, i + 2);
            const steps = Math.max(1, Math.round((x1 - x0) / 1.5));
            for (let s = 1; s <= steps; s++) {
                const t = s / steps;
                const jitter = s < steps ? (random() - 0.5) * 8 : 0;
                a += "L" + (x0 + (x1 - x0) * t).toFixed(1) + " " + (y0 + (y1 - y0) * t + jitter).toFixed(1);
            }
        }
        document.getElementById("trace-a").setAttribute("d", a);

        // Quantised supply voltage between the switching edges
        function ripple(from, to) {
            const levels = [355.5, 360.5, 365.5];
            let d = "";
            let x = from;
            let last = 1;
            while (x < to) {
                // mostly moves to another level, sometimes rests
                last = random() < 0.85 ? (last + 1 + Math.floor(random() * 2)) % 3 : last;
                const hold = random() < 0.12 ? 4 : 0.7;
                d += "L" + x.toFixed(1) + " " + levels[last] + "L" + Math.min(x + hold, to).toFixed(1) + " " + levels[last];
                x += hold + 1.5;
            }
            return d;
        }
        const b = "M193.5 360L194 365.5H199.5L200 405L201.5 501L205 492.5H211L212 497L214 492.5H217L219 483L222 486L223 482H232.5L233.5 150L235 172L237 190L243 208L245 240L247 320L249 358L250 350L252 360"
            + ripple(253, 1170)
            + "L1171.5 365.5L1172.5 405L1173.5 501L1177 492.5H1189L1192 485L1196 482H1204.5L1206.5 160L1208 190L1210 222L1213 224L1215.5 210L1218.5 224L1219.5 350L1221 370L1222 355"
            + ripple(1223, 1257);
        document.getElementById("trace-b").setAttribute("d", b);
    </script>
</body>
</html>
